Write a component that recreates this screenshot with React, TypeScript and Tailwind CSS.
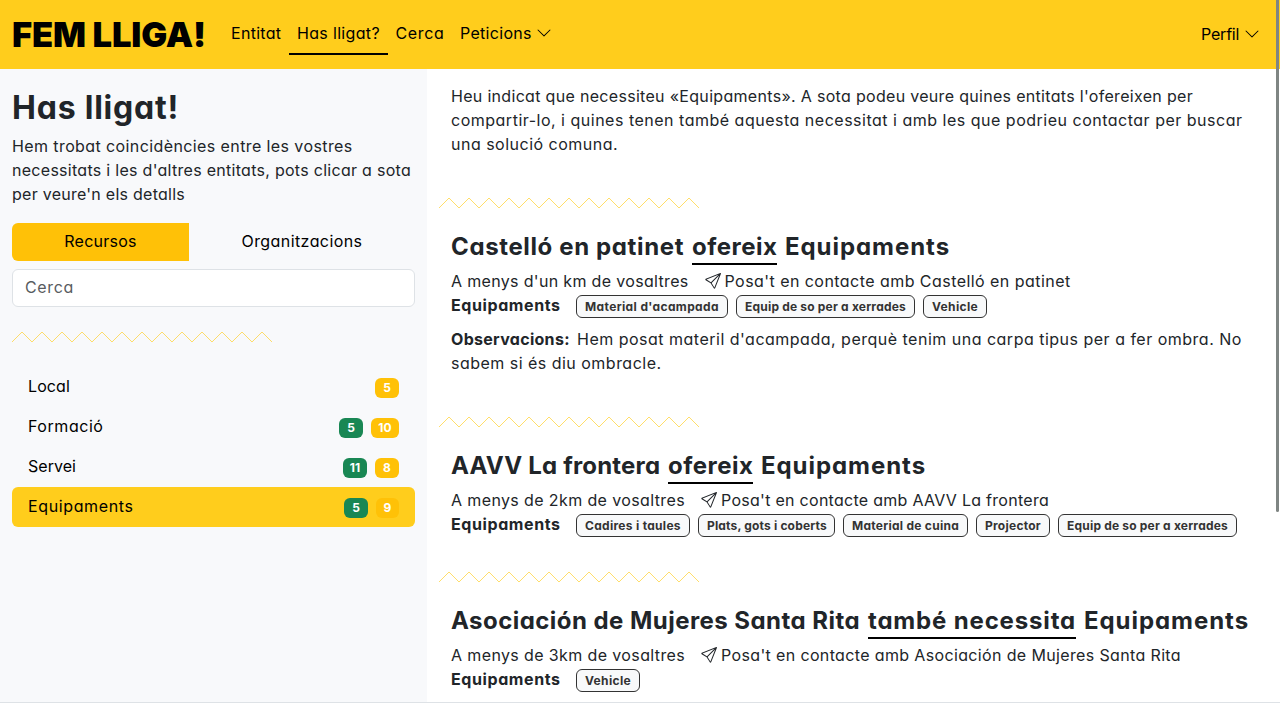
import type { ReactNode } from "react";
import { BsChevronDown, BsSend } from "react-icons/bs";

function Zigzag() {
  const points = Array.from({ length: 27 }, (_, i) => `${i * 10},${i % 2 ? 0.2 : 10.2}`).join(" ");
  return (
    <svg width="260" height="11" viewBox="0 0 260 11" className="block shrink-0" shapeRendering="crispEdges" aria-hidden="true">
      <polyline points={points} fill="none" stroke="#ffcd1c" strokeWidth="0.65" />
    </svg>
  );
}

type Resource = {
  name: string;
  track: string;
  green?: { value: string; width: string };
  yellow: { value: string; width: string };
  active?: boolean;
};

const resources: Resource[] = [
  { name: "Local", track: "tracking-[0.11px]", yellow: { value: "5", width: "w-6" } },
  { name: "Formació", track: "tracking-[0.55px]", green: { value: "5", width: "w-6" }, yellow: { value: "10", width: "w-7" } },
  { name: "Servei", track: "tracking-[0.04px]", green: { value: "11", width: "w-6" }, yellow: { value: "8", width: "w-6" } },
  { name: "Equipaments", track: "tracking-[0.63px]", green: { value: "5", width: "w-6" }, yellow: { value: "9", width: "w-[23px]" }, active: true },
];

type Tag = { label: string; style: string };

const tags = {
  camping: { label: "Material d'acampada", style: "w-[152px] tracking-[0.37px]" },
  sound: { label: "Equip de so per a xerrades", style: "w-[179px] tracking-[0.2px]" },
  vehicle: { label: "Vehicle", style: "w-[63.5px] tracking-[0.35px]" },
  chairs: { label: "Cadires i taules", style: "w-[114px] tracking-[0.3px]" },
  plates: { label: "Plats, gots i coberts", style: "w-[137px] tracking-[0.17px]" },
  kitchen: { label: "Material de cuina", style: "w-[125px] tracking-[0.27px]" },
  projector: { label: "Projector", style: "w-[74px] tracking-[0.25px]" },
};

type MatchProps = {
  name: string;
  nameStyle: string;
  verb: string;
  verbStyle: string;
  distance: string;
  distanceStyle: string;
  contactStyle: string;
  tagList: Tag[];
  children?: ReactNode;
};

function Match(p: MatchProps) {
  return (
    <section>
      <div className="-ml-3"><Zigzag /></div>
      <h2 className="mt-[21px] flex h-[35px] gap-2 text-2xl leading-[33px] font-bold">
        <span className={`shrink-0 ${p.nameStyle}`}>{p.name}</span>
        <span className={`shrink-0 border-b-2 border-black ${p.verbStyle}`}>{p.verb}</span>
        <span className="tracking-[0.95px]">Equipaments</span>
      </h2>
      <div className="mt-1 flex h-6">
        <span className={`shrink-0 ${p.distanceStyle}`}>{p.distance}</span>
        <a className="ml-4 flex items-center">
          <BsSend className="mr-1 size-4" />
          <span className={p.contactStyle}>Posa't en contacte amb {p.name}</span>
        </a>
      </div>
      <div className="flex h-6">
        <strong className="w-[125px] shrink-0 tracking-[0.6px]">Equipaments</strong>
        <div className="flex gap-2 pt-[2px]">
          {p.tagList.map((t) => (
            <span key={t.label} className={`h-[23px] shrink-0 rounded-md border border-[#333] bg-[#f8f9fa] pl-2 text-xs leading-[22px] font-bold text-[#333] ${t.style}`}>{t.label}</span>
          ))}
        </div>
      </div>
      {p.children}
    </section>
  );
}

export default function App() {
  return (
    <div className="relative flex h-[720px] w-[1280px] flex-col overflow-hidden bg-white font-['Inter',sans-serif] text-base leading-6 whitespace-nowrap text-[#212529] [font-feature-settings:'cv11']">
      <nav className="flex h-[69px] shrink-0 bg-[#ffcd1c] px-3 text-black">
        <div className="w-[211px] text-[34.5px] leading-[69px] font-black tracking-[-0.15px]">FEM LLIGA!</div>
        <div className="flex h-[55px] pt-[13px]">
          <a className="w-[66px] pt-2 pl-2 tracking-[0.28px]">Entitat</a>
          <a className="w-[99px] border-b-2 border-black pt-2 pl-2 tracking-[0.33px]">Has lligat?</a>
          <a className="w-[64px] pt-2 pl-[7.5px] tracking-[0.65px]">Cerca</a>
          <a className="flex pt-2 pl-2"><span className="w-[76px] tracking-[0.3px]">Peticions</span><BsChevronDown className="mt-1 size-4" /></a>
        </div>
        <a className="mt-[22px] mr-[8px] ml-auto flex"><span className="w-[43px] tracking-[-0.2px]">Perfil</span><BsChevronDown className="mt-1 size-4" /></a>
      </nav>

      <div className="flex h-[633px] shrink-0">
        <aside className="w-[427px] shrink-0 bg-[#f8f9fb] px-3 pt-5">
          <h1 className="text-[32px] leading-[38px] font-bold tracking-[0.78px]">Has lligat!</h1>
          <div className="mt-[7px]">
            <div className="tracking-[0.4px]">Hem trobat coincidències entre les vostres</div>
            <div className="tracking-[0.285px]">necessitats i les d'altres entitats, pots clicar a sota</div>
            <div className="tracking-[0.26px]">per veure'n els detalls</div>
          </div>
          <div className="mt-[17px] flex h-[38px] text-center leading-[36px] text-black">
            <button className="w-[177px] rounded-l-md bg-[#ffc107] pb-[2px] tracking-[0.25px]">Recursos</button>
            <button className="w-[226px] pb-[2px] tracking-[0.42px]">Organitzacions</button>
          </div>
          <div className="mt-2 h-[38px] rounded-md border border-[#dee2e6] bg-white pl-3 leading-[35px] tracking-[0.65px] text-[#595c5f]">Cerca</div>
          <div className="mt-[25px]"><Zigzag /></div>
          <ul className="mt-6 text-black">
            {resources.map((r) => (
              <li key={r.name} className={`flex h-10 rounded-md px-4 ${r.active ? "bg-[#ffcd1c]" : ""}`}>
                <span className={`leading-[39px] ${r.track}`}>{r.name}</span>
                <span className="mt-[11px] ml-auto flex gap-2 text-center text-xs leading-5 font-bold text-white">
                  {r.green && <span className={`h-5 rounded-md bg-[#198754] ${r.green.width}`}>{r.green.value}</span>}
                  <span className={`h-5 rounded-md bg-[#ffc107] ${r.yellow.width}`}>{r.yellow.value}</span>
                </span>
              </li>
            ))}
          </ul>
        </aside>

        <main className="min-w-0 flex-1 overflow-hidden pt-[15px] pl-6">
          <div className="mb-[42px]">
            <div className="tracking-[0.31px]">Heu indicat que necessiteu «Equipaments». A sota podeu veure quines entitats l'ofereixen per</div>
            <div className="tracking-[0.505px]">compartir-lo, i quines tenen també aquesta necessitat i amb les que podrieu contactar per buscar</div>
            <div className="tracking-[0.49px]">una solució comuna.</div>
          </div>
          <div className="h-[219px]">
            <Match
              name="Castelló en patinet" nameStyle="w-[233px] tracking-[0.63px]"
              verb="ofereix" verbStyle="w-[85px] tracking-[0.5px]"
              distance="A menys d'un km de vosaltres" distanceStyle="w-[237.5px] tracking-[0.33px]"
              contactStyle="tracking-[0.45px]"
              tagList={[tags.camping, tags.sound, tags.vehicle]}
            >
              <div className="mt-[10px]">
                <div className="flex">
                  <strong className="w-[126px] shrink-0 tracking-[0.3px]">Observacions:</strong>
                  <span className="tracking-[0.495px]">Hem posat materil d'acampada, perquè tenim una carpa tipus per a fer ombra. No</span>
                </div>
                <div className="tracking-[0.48px]">sabem si és diu ombracle.</div>
              </div>
            </Match>
          </div>
          <div className="h-[155px]">
            <Match
              name="AAVV La frontera" nameStyle="w-[209px] tracking-[0.2px]"
              verb="ofereix" verbStyle="w-[85px] tracking-[0.5px]"
              distance="A menys de 2km de vosaltres" distanceStyle="w-[234px] tracking-[0.38px]"
              contactStyle="tracking-[0.28px]"
              tagList={[tags.chairs, tags.plates, tags.kitchen, tags.projector, tags.sound]}
            />
          </div>
          <Match
            name="Asociación de Mujeres Santa Rita" nameStyle="w-[409px] tracking-[0.455px]"
            verb="també necessita" verbStyle="w-[208px] tracking-[0.84px]"
            distance="A menys de 3km de vosaltres" distanceStyle="w-[234px] tracking-[0.38px]"
            contactStyle="tracking-[0.36px]"
            tagList={[tags.vehicle]}
          />
        </main>
      </div>
      <footer className="h-[18px] shrink-0 border-t border-[#dee2e6] bg-white" />
      <div className="absolute top-0 right-[1.5px] h-[512px] w-[3px] rounded-b-sm bg-[#7f8583]" />
    </div>
  );
}
